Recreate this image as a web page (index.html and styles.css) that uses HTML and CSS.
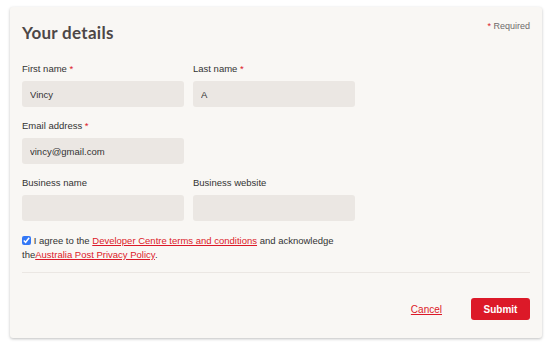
FILE: index.html
```html
<!DOCTYPE html>
<html lang="en">
<head>
    <meta charset="UTF-8">
    <meta name="viewport" content="width=device-width, initial-scale=1.0">
    <title>Your details</title>
    <link rel="stylesheet" href="styles.css">
</head>
<body>
    <div class="card">
        <div class="card-head">
            <h2>Your details</h2>
            <span class="required"><span class="star">*</span> Required</span>
        </div>
        <form class="form">
            <div class="row">
                <div class="field">
                    <label>First name <span class="star">*</span></label>
                    <input type="text" class="input" value="Vincy">
                </div>
                <div class="field">
                    <label>Last name <span class="star">*</span></label>
                    <input type="text" class="input" value="A">
                </div>
            </div>
            <div class="row">
                <div class="field">
                    <label>Email address <span class="star">*</span></label>
                    <input type="text" class="input" value="vincy@gmail.com">
                </div>
            </div>
            <div class="row">
                <div class="field">
                    <label>Business name</label>
                    <input type="text" class="input">
                </div>
                <div class="field">
                    <label>Business website</label>
                    <input type="text" class="input">
                </div>
            </div>
            <p class="agree"><input type="checkbox" class="check" checked> I agree to the <a href="#">Developer Centre terms and conditions</a> and acknowledge<br>the<a href="#">Australia Post Privacy Policy</a>.</p>
            <div class="actions">
                <a href="#" class="cancel">Cancel</a>
                <button type="button" class="submit">Submit</button>
            </div>
        </form>
    </div>
</body>
</html>
```

FILE: styles.css
```css
body {
    font-family: "Liberation Sans", Arial, sans-serif;
    margin: 0;
    padding: 7px 8px 8px 10px;
    background: #fff;
    color: #333;
}

.card {
    width: 532px;
    height: 331px;
    box-sizing: border-box;
    background: #f9f7f4;
    border-radius: 3px;
    box-shadow: 0 1px 3px rgba(0, 0, 0, 0.25);
    padding: 0 12px;
}

.card-head {
    display: flex;
    justify-content: space-between;
    align-items: flex-start;
    height: 56px;
}

.card-head h2 {
    font-family: Lato, sans-serif;
    font-size: 17px;
    font-weight: 700;
    color: #4d4747;
    margin: 0;
    padding-top: 15px;
    letter-spacing: 0.3px;
}

.required {
    font-size: 9px;
    color: #6e6a6a;
    padding-top: 14px;
}

.star {
    color: #dc1928;
}

.row {
    display: flex;
    gap: 9px;
    margin-bottom: 13px;
}

.row:nth-of-type(3) {
    margin-top: 1px;
}

.field {
    display: flex;
    flex-direction: column;
    width: 162px;
}

.field label {
    font-size: 9.5px;
    color: #333;
    height: 13px;
    margin-bottom: 5px;
}

.input {
    height: 26px;
    box-sizing: border-box;
    border: none;
    border-radius: 3px;
    background: #ebe7e3;
    font-family: "Liberation Sans", Arial, sans-serif;
    font-size: 9.5px;
    color: #333;
    padding: 0 8px;
    outline: none;
}

.agree {
    margin: 0;
    font-size: 9.5px;
    line-height: 14px;
    color: #333;
    padding-bottom: 10px;
    border-bottom: 1px solid #ebe7e3;
}

.agree a {
    color: #dc1928;
}

.check {
    width: 9px;
    height: 9px;
    margin: 0;
    vertical-align: -1px;
    accent-color: #3478f6;
}

.actions {
    display: flex;
    justify-content: flex-end;
    align-items: center;
    gap: 29px;
    padding-top: 25px;
}

.cancel {
    color: #dc1928;
    font-size: 10px;
}

.submit {
    width: 59px;
    height: 22px;
    border: none;
    border-radius: 3px;
    background: #dc1928;
    color: #fff;
    font-family: "Liberation Sans", Arial, sans-serif;
    font-weight: 700;
    font-size: 10px;
    cursor: pointer;
}
```
